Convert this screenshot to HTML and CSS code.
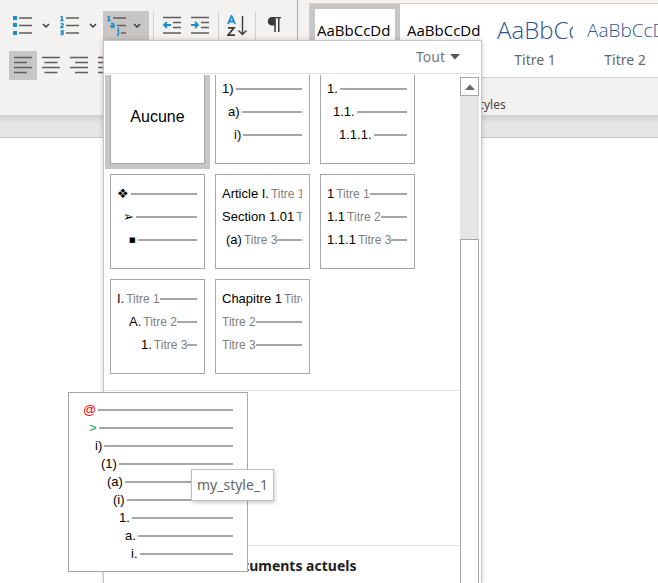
FILE: index.html
```html
<!DOCTYPE html>
<html lang="fr">
<head>
<meta charset="utf-8">
<title>Document</title>
<link rel="stylesheet" href="styles.css">
</head>
<body>
<header class="ribbon">
  <div class="paragraph">
    <div class="tools">
      <button class="tool" aria-label="Puces"><svg width="20" height="20" viewBox="0 0 20 20"><path fill="#1e8bcd" d="M0 0h4v4H0zM0 7h4v4H0zM0 15h4v4H0z"/><path class="ln" d="M6 2h13M6 9.500h13M6 17h13"/></svg></button>
      <button class="caret" aria-label="Options des puces"><svg width="8" height="6" viewBox="0 0 8 6"><path class="chev" d="M1 1l3 3 3-3"/></svg></button>
      <button class="tool" aria-label="Numérotation"><svg width="20" height="20" viewBox="0 0 20 20"><path class="num" d="M.6 1L2 .5V4.500M.3 4.500h3.400M.5 8q2.800-1 2.600.7Q3 10 .6 11.500h3M.6 15h2.500l-1.300 1.500q1.500 0 1.400 1.200-.3 1.300-2.700.7"/><path class="ln" d="M6 2h13M6 9.500h13M6 17h13"/></svg></button>
      <button class="caret" aria-label="Options de numérotation"><svg width="8" height="6" viewBox="0 0 8 6"><path class="chev" d="M1 1l3 3 3-3"/></svg></button>
      <button class="tool multi" aria-label="Liste à plusieurs niveaux" aria-expanded="true"><svg width="20" height="20" viewBox="0 0 20 20"><path class="num" d="M.6 1L2 .5V4.500M.3 4.500h3.400M4 7.800q3-.8 3 .8v3M7 9.500q-3.200-.3-3 1.200.5 1.300 3-.2M10 14.200h1.500V18q0 1.400-1.500 1.200M11.500 11.500v1.500"/><path class="ln" d="M6 2h13M10 9.500h9M14 17h5"/></svg><svg width="8" height="6" viewBox="0 0 8 6"><path class="chev" d="M1 1l3 3 3-3"/></svg></button>
      <span class="sep"></span>
      <button class="tool" aria-label="Diminuer le retrait"><svg width="20" height="20" viewBox="0 0 20 20"><path class="ln" d="M1 1.500h18M11 6.500h8M11 11.500h8M1 17h18"/><path class="arrow" d="M9 9H2M5 6L2 9l3 3"/></svg></button>
      <button class="tool" aria-label="Augmenter le retrait"><svg width="20" height="20" viewBox="0 0 20 20"><path class="ln" d="M1 1.500h18M11 6.500h8M11 11.500h8M1 17h18"/><path class="arrow" d="M1 9h7M5 6l3 3-3 3"/></svg></button>
      <span class="sep"></span>
      <button class="tool" aria-label="Trier"><svg width="20" height="22" viewBox="0 0 20 22"><path fill="none" stroke="#1e8bcd" stroke-width="1.800" d="M.9 9L4.500.8 8.100 9M2.200 6.500h4.600"/><path fill="none" stroke="#3b3b3b" stroke-width="1.700" d="M1 12.800h6L1 20.200h7"/><path fill="none" stroke="#3b3b3b" stroke-width="1.400" d="M15.500 1v18M11.500 15.500l4 4 4-4"/></svg></button>
      <span class="sep"></span>
      <button class="tool" aria-label="Afficher tout"><svg width="20" height="20" viewBox="0 0 20 20"><path fill="#3b3b3b" d="M8 1h9v1.200h-1.500V16H14V2.200h-2.200V16h-1.500V9.500H8A4.200 4.200 0 0 1 8 1z"/></svg></button>
    </div>
    <div class="tools">
      <button class="tool active" aria-label="Aligner à gauche"><svg width="20" height="20" viewBox="0 0 20 20"><path class="ln" d="M1 1.500h18M1 6.500h13M1 11.500h18M1 16.500h13"/></svg></button>
      <button class="tool" aria-label="Centrer"><svg width="20" height="20" viewBox="0 0 20 20"><path class="ln" d="M1 1.500h18M3.500 6.500h13M1 11.500h18M3.500 16.500h13"/></svg></button>
      <button class="tool" aria-label="Aligner à droite"><svg width="20" height="20" viewBox="0 0 20 20"><path class="ln" d="M1 1.500h18M6 6.500h13M1 11.500h18M6 16.500h13"/></svg></button>
      <button class="tool" aria-label="Justifier"><svg width="20" height="20" viewBox="0 0 20 20"><path class="ln" d="M1 1.500h18M1 6.500h18M1 11.500h18M1 16.500h18"/></svg></button>
    </div>
  </div>
  <div class="styles">
    <div class="gallery">
      <button class="style selected"><span class="sample">AaBbCcDd</span><span class="name">Normal</span></button>
      <button class="style"><span class="sample">AaBbCcDd</span><span class="name">Sans int…</span></button>
      <button class="style"><span class="sample h1">AaBbCc</span><span class="name">Titre 1</span></button>
      <button class="style"><span class="sample h2">AaBbCcD</span><span class="name">Titre 2</span></button>
    </div>
    <div class="group-name">Styles</div>
  </div>
</header>
<div class="backdrop"></div>
<main class="page"></main>

<section class="menu">
  <div class="menu-head"><button class="filter">Tout<svg width="10" height="6" viewBox="0 0 10 6"><path fill="#555" d="M0 0h10L5 5.500z"/></svg></button></div>
  <div class="menu-body">
    <div class="content">
      <div class="tiles">
        <button class="tile none">Aucune</button>
        <button class="tile">
          <span class="row"><span class="mark">1)</span><i></i></span>
          <span class="row l1"><span class="mark">a)</span><i></i></span>
          <span class="row l2"><span class="mark">i)</span><i></i></span>
        </button>
        <button class="tile">
          <span class="row"><span class="mark">1.</span><i></i></span>
          <span class="row l1"><span class="mark">1.1.</span><i></i></span>
          <span class="row l2"><span class="mark">1.1.1.</span><i></i></span>
        </button>
        <button class="tile">
          <span class="row"><span class="mark sym">❖</span><i></i></span>
          <span class="row l1"><span class="mark sym">➢</span><i></i></span>
          <span class="row l2"><span class="mark sym square">■</span><i></i></span>
        </button>
        <button class="tile">
          <span class="row"><span class="mark">Article I.</span><span class="title">Titre 1</span><i></i></span>
          <span class="row"><span class="mark">Section 1.01</span><span class="title">Titre 2</span><i></i></span>
          <span class="row article"><span class="mark">(a)</span><span class="title">Titre 3</span><i></i></span>
        </button>
        <button class="tile">
          <span class="row"><span class="mark">1</span><span class="title">Titre 1</span><i></i></span>
          <span class="row"><span class="mark">1.1</span><span class="title">Titre 2</span><i></i></span>
          <span class="row"><span class="mark">1.1.1</span><span class="title">Titre 3</span><i></i></span>
        </button>
        <button class="tile">
          <span class="row"><span class="mark">I.</span><span class="title">Titre 1</span><i></i></span>
          <span class="row l2"><span class="mark">A.</span><span class="title">Titre 2</span><i></i></span>
          <span class="row l4"><span class="mark">1.</span><span class="title">Titre 3</span><i></i></span>
        </button>
        <button class="tile">
          <span class="row"><span class="mark">Chapitre 1</span><span class="title">Titre 1</span><i></i></span>
          <span class="row"><span class="title">Titre 2</span><i></i></span>
          <span class="row"><span class="title">Titre 3</span><i></i></span>
        </button>
      </div>
      <div class="list-styles"></div>
      <h2>Listes dans les documents actuels</h2>
    </div>
    <div class="scrollbar">
      <button class="up" aria-label="Défiler vers le haut"><svg width="10" height="6" viewBox="0 0 10 6"><path fill="#666" d="M0 6h10L5 .5z"/></svg></button>
      <div class="thumb"></div>
    </div>
  </div>
</section>

<div class="preview">
  <span class="row"><span class="mark red">@</span><i></i></span>
  <span class="row l1"><span class="mark green">&gt;</span><i></i></span>
  <span class="row l2"><span class="mark">i)</span><i></i></span>
  <span class="row l3"><span class="mark">(1)</span><i></i></span>
  <span class="row l4"><span class="mark">(a)</span><i></i></span>
  <span class="row l5"><span class="mark">(i)</span><i></i></span>
  <span class="row l6"><span class="mark">1.</span><i></i></span>
  <span class="row l7"><span class="mark">a.</span><i></i></span>
  <span class="row l8"><span class="mark">i.</span><i></i></span>
  <div class="tooltip" role="tooltip">my_style_1</div>
</div>
</body>
</html>
```
FILE: styles.css
```css
* { box-sizing: border-box; }

body {
  margin: 0;
  min-height: 100vh;
  overflow: hidden;
  background: #fff;
  color: #444;
  font: 14px/20px "Noto Sans", sans-serif;
}

button {
  margin: 0;
  padding: 0;
  border: 0;
  background: none;
  color: inherit;
  font: inherit;
}

/* Ribbon */
.ribbon {
  display: flex;
  background: #f3f2f1;
  overflow: hidden;
}

.paragraph {
  flex: none;
  display: flex;
  flex-direction: column;
  gap: 11px;
  padding: 11px 9px 35px;
  border-right: 1px solid #ababab;
}

.tools { display: flex; height: 29px; }

.tool,
.caret {
  width: 28px;
  display: flex;
  align-items: center;
  justify-content: center;
}

.tool.active { background: #c8c6c4; }

.tool.multi {
  width: 46px;
  gap: 6px;
  padding-right: 4px;
  background: #c8c6c4;
}

.caret { width: 17px; margin-right: 2px; }

.sep { width: 1px; margin: 1px 4px 0; background: #d0cecc; }

.ln { stroke: #605e5c; stroke-width: 1.5; fill: none; }
.num { stroke: #1e8bcd; stroke-width: 1.5; fill: none; }
.arrow { stroke: #1e8bcd; stroke-width: 1.8; fill: none; }
.chev { stroke: #3b3b3b; stroke-width: 1.5; fill: none; }

.styles { flex: 1; min-width: 0; padding: 3px 0 0 11px; }

.gallery {
  display: flex;
  height: 75px;
  overflow: hidden;
  border: 1px solid #d2d0ce;
  border-right: 0;
  background: #fff;
}

.style {
  flex: none;
  width: 90px;
  padding: 7px;
  display: flex;
  flex-direction: column;
  align-items: center;
}

.style.selected {
  padding: 2px;
  border: 5px solid #c6c6c6;
}

.sample {
  width: 76px;
  height: 40px;
  overflow: hidden;
  color: #000;
  font: 15px/38px "Open Sans", sans-serif;
  text-align: left;
  white-space: nowrap;
}

.sample.h1, .sample.h2 { color: #2f5496; font-weight: 300; }
.sample.h1 { font-size: 24px; }
.sample.h2 { font-size: 19px; }

.name { color: #666; }

.group-name {
  padding: 17px 0 0 164px;
  font-size: 12px;
}

.backdrop {
  height: 23px;
  border-bottom: 1px solid #c6c6c6;
  background: linear-gradient(#cfcfcf, #e6e6e6 8px);
}

/* Shared list rows */
.row {
  display: flex;
  align-items: center;
  overflow: hidden;
  color: #000;
  font-family: "Liberation Sans", sans-serif;
  font-size: 13px;
  white-space: nowrap;
}

.row i { flex: 1; height: 2px; background: #a6a6a6; }
.mark { margin-right: 2px; }
.sym { font-family: "DejaVu Sans", sans-serif; }
.square { font-size: 7px; }
.title { color: #808080; font-size: 12px; }
.red { color: #f00; }
.green { color: #00a651; }
.article { padding-left: 4px; }
.l1 { padding-left: 6px; }
.l2 { padding-left: 12px; }
.l3 { padding-left: 18px; }
.l4 { padding-left: 24px; }
.l5 { padding-left: 30px; }
.l6 { padding-left: 36px; }
.l7 { padding-left: 42px; }
.l8 { padding-left: 48px; }

/* Drop-down gallery */
.menu {
  position: absolute;
  top: 40px;
  bottom: 0;
  left: 103px;
  width: 379px;
  display: flex;
  flex-direction: column;
  border: 1px solid #c6c6c6;
  border-bottom: 0;
  background: #fff;
  box-shadow: 0 0 5px rgba(0, 0, 0, 0.2);
}

.menu-head {
  display: flex;
  justify-content: flex-end;
  height: 33px;
  margin: 0 1px;
  padding-right: 20px;
  border-bottom: 1px solid #e1e1e1;
}

.filter {
  display: flex;
  align-items: center;
  gap: 5px;
  color: #777;
}

.menu-body {
  flex: 1;
  min-height: 0;
  display: flex;
  margin: 1px 1px 0;
}

.content { flex: 1; min-width: 0; overflow: hidden; }

.tiles {
  display: grid;
  grid-template-columns: repeat(3, 95px);
  grid-auto-rows: 95px;
  gap: 10px;
  margin-top: -6px;
  padding: 0 5px 16px;
  border-bottom: 1px solid #e1e1e1;
}

.tile {
  display: flex;
  flex-direction: column;
  padding: 7px 7px 0 6px;
  border: 1px solid #a6a6a6;
}

.tile .row { width: 100%; height: 23px; flex: none; }

.none {
  align-items: center;
  justify-content: center;
  padding: 0;
  box-shadow: 0 0 0 5px #c6c6c6;
  color: #000;
  font: 16px/20px "Liberation Sans", sans-serif;
}

.list-styles { height: 155px; border-bottom: 1px solid #e1e1e1; }

h2 {
  margin: 0;
  padding: 10px 15px;
  color: #222;
  font-size: 14px;
  line-height: 20px;
  font-weight: 700;
}

.scrollbar {
  width: 19px;
  margin: 2px 1px 0 0;
  display: flex;
  flex-direction: column;
  gap: 143px;
  background: #e6e6e6;
}

.up {
  height: 19px;
  display: flex;
  align-items: center;
  justify-content: center;
  border: 1px solid #a6a6a6;
  background: #fff;
}

.thumb {
  flex: 1;
  border: 1px solid #a6a6a6;
  border-bottom: 0;
  background: #fff;
}

/* Enlarged preview of the hovered list style */
.preview {
  position: absolute;
  top: 392px;
  left: 68px;
  width: 180px;
  padding: 8px 14px;
  border: 1px solid #a6a6a6;
  background: #fff;
}

.preview .row { height: 18px; }

.tooltip {
  position: absolute;
  top: 76px;
  left: 122px;
  padding: 5px;
  border: 1px solid #bebebe;
  background: #fff;
  color: #666;
  box-shadow: 1px 2px 4px rgba(0, 0, 0, 0.2);
}
```
